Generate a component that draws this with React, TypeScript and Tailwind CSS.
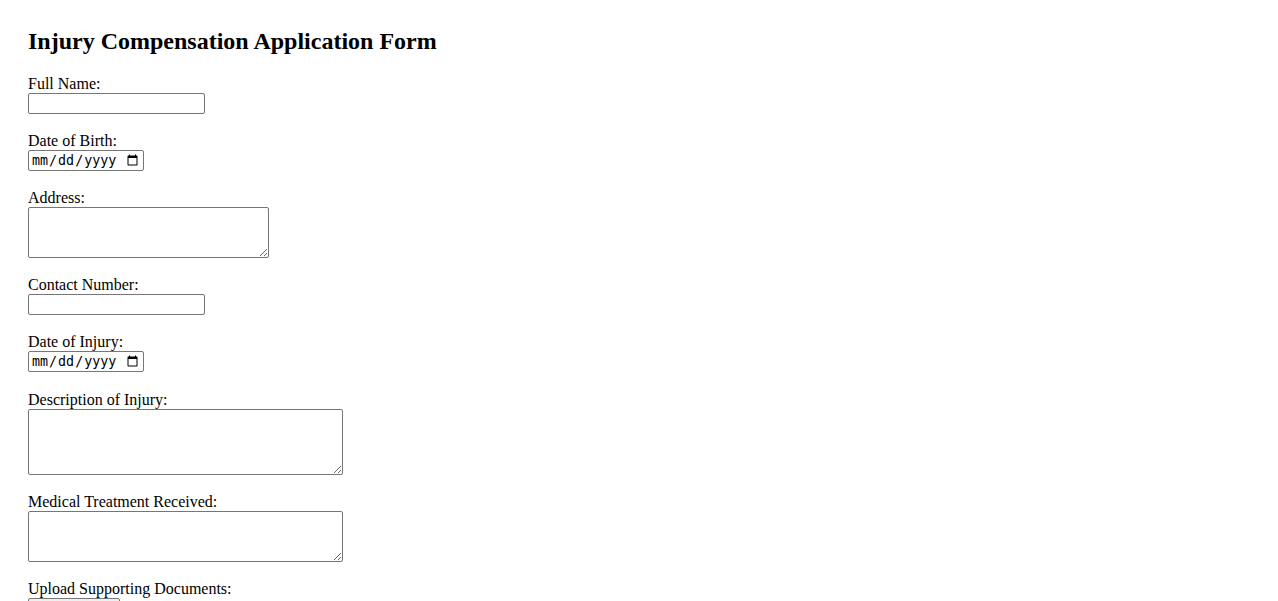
import { useState } from "react"

const inputCls =
  "block border border-[#767676] rounded-[2px] bg-white px-[2px] font-['Liberation_Sans',Arial,sans-serif] text-[13.33px] text-black"

export default function App() {
  const [form, setForm] = useState({
    name: "",
    dob: "",
    address: "",
    contact: "",
    injuryDate: "",
    description: "",
    treatment: ""
  })

  // 更新字段
  const set = (key: keyof typeof form) => (e: { target: { value: string } }) =>
    setForm({ ...form, [key]: e.target.value })

  return (
    <div className="min-h-screen bg-white px-[28px] pt-[28px] pb-[28px] font-['Liberation_Serif','Times_New_Roman',serif] text-[16px] text-black">
      <h2 className="text-[24px] font-bold leading-[27px] mb-[20px]">Injury Compensation Application Form</h2>
      <form className="flex flex-col items-start" onSubmit={(e) => e.preventDefault()}>
        <label htmlFor="name" className="block leading-[18px]">Full Name:</label>
        <input
          id="name"
          type="text"
          value={form.name}
          onChange={set("name")}
          className={`${inputCls} w-[177px] h-[21px] mb-[18px]`}
        />

        <label htmlFor="dob" className="block leading-[18px]">Date of Birth:</label>
        <input
          id="dob"
          type="date"
          value={form.dob}
          onChange={set("dob")}
          className="block w-[116px] h-[21px] mb-[18px] border border-[#767676] rounded-[2px] bg-white px-[2px] font-['DejaVu_Sans_Mono',monospace] text-[13.33px] text-black"
        />

        <label htmlFor="address" className="block leading-[18px]">Address:</label>
        <textarea
          id="address"
          rows={3}
          value={form.address}
          onChange={set("address")}
          className="block w-[241px] h-[51px] mb-[18px] border border-[#767676] rounded-[2px] bg-white p-[2px] font-mono text-[13.33px]"
        />

        <label htmlFor="contact" className="block leading-[18px]">Contact Number:</label>
        <input
          id="contact"
          type="tel"
          value={form.contact}
          onChange={set("contact")}
          className={`${inputCls} w-[177px] h-[21px] mb-[18px]`}
        />

        <label htmlFor="injuryDate" className="block leading-[18px]">Date of Injury:</label>
        <input
          id="injuryDate"
          type="date"
          value={form.injuryDate}
          onChange={set("injuryDate")}
          className="block w-[116px] h-[21px] mb-[19px] border border-[#767676] rounded-[2px] bg-white px-[2px] font-['DejaVu_Sans_Mono',monospace] text-[13.33px] text-black"
        />

        <label htmlFor="description" className="block leading-[18px]">Description of Injury:</label>
        <textarea
          id="description"
          rows={4}
          value={form.description}
          onChange={set("description")}
          className="block w-[315px] h-[66px] mb-[18px] border border-[#767676] rounded-[2px] bg-white p-[2px] font-mono text-[13.33px]"
        />

        <label htmlFor="treatment" className="block leading-[18px]">Medical Treatment Received:</label>
        <textarea
          id="treatment"
          rows={3}
          value={form.treatment}
          onChange={set("treatment")}
          className="block w-[315px] h-[51px] mb-[18px] border border-[#767676] rounded-[2px] bg-white p-[2px] font-mono text-[13.33px]"
        />

        <label htmlFor="docs" className="block leading-[18px]">Upload Supporting Documents:</label>
        <input
          id="docs"
          type="file"
          multiple
          className="block mb-[18px] font-['Liberation_Sans',Arial,sans-serif] text-[13.33px] file:mr-[4px] file:border file:border-[#767676] file:rounded-[2px] file:bg-[#efefef] file:px-[6px] file:py-[1px]"
        />

        <button
          type="submit"
          className="border border-[#767676] rounded-[2px] bg-[#efefef] px-[6px] py-[1px] font-['Liberation_Sans',Arial,sans-serif] text-[13.33px]"
        >
          Submit Application
        </button>
      </form>
    </div>
  )
}
